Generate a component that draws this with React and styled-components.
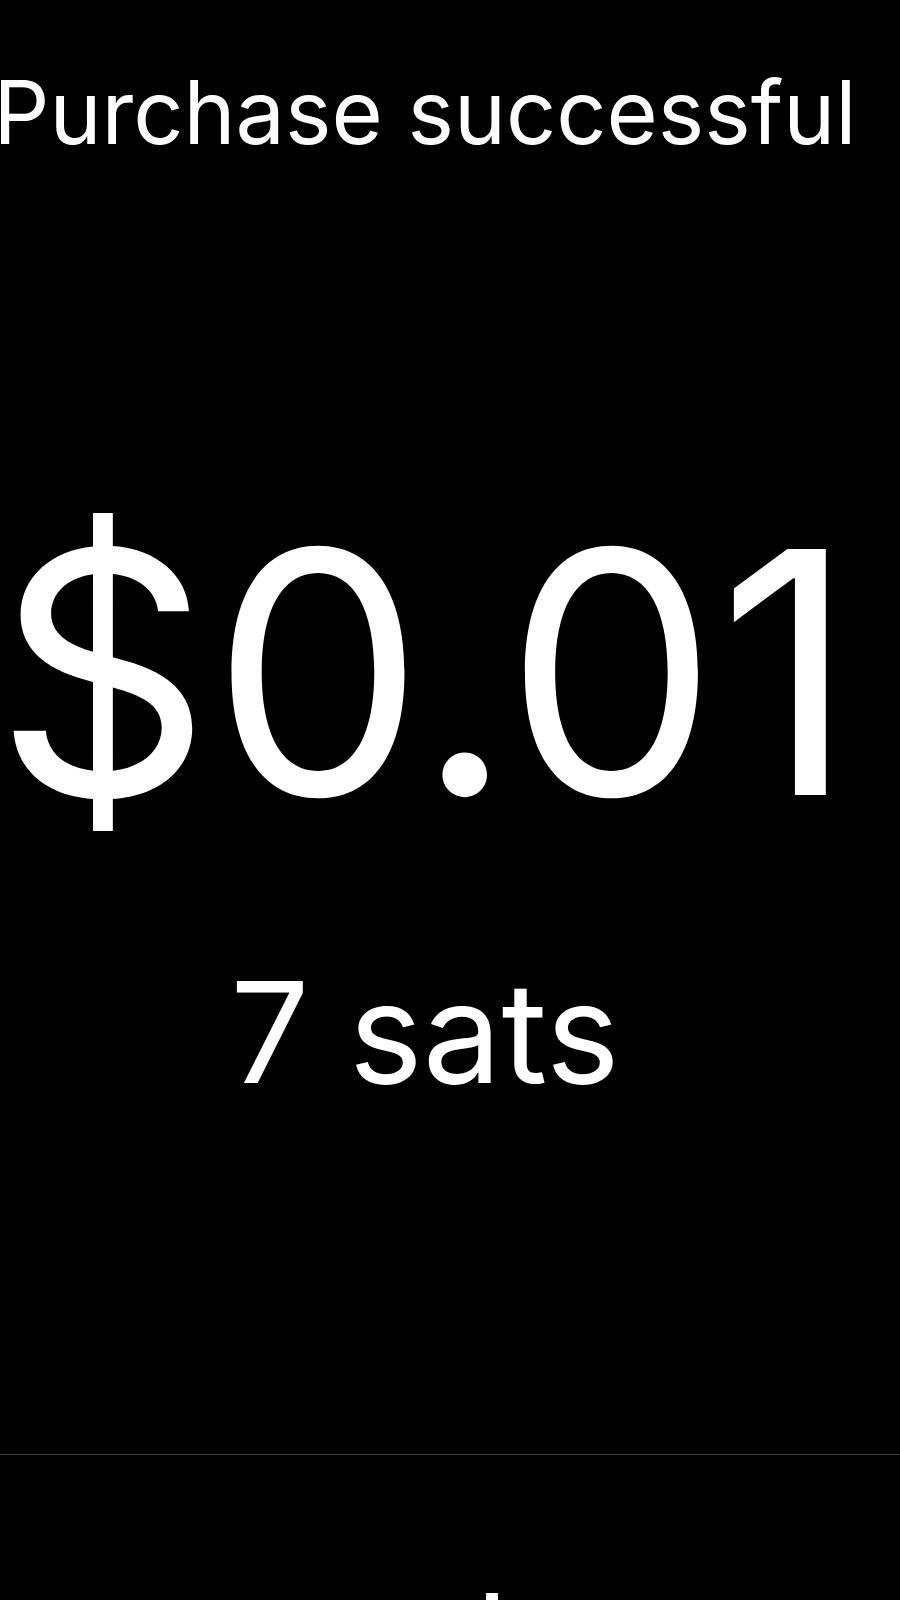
import React from "react";
import styled, { createGlobalStyle } from "styled-components";

const GlobalStyle = createGlobalStyle`
  html, body {
    margin: 0;
    padding: 0;
    background: #000;
  }
  body {
    font-family: Inter, "Liberation Sans", Arial, sans-serif;
    color: #fff;
    overflow: hidden;
  }
`;

const Screen = styled.div`
  width: 900px;
  height: 1600px;
  background: #000;
  display: flex;
  flex-direction: column;
  overflow: hidden;
`;

const Receipt = styled.section`
  display: flex;
  flex-direction: column;
  align-items: center;
  flex-shrink: 0;
  width: 850px;
  padding-top: 68px;
`;

const Title = styled.h1`
  margin: 0;
  font-size: 88px;
  font-weight: 400;
  line-height: 1;
  white-space: nowrap;
`;

const Amount = styled.div`
  margin-top: 348px;
  font-size: 338px;
  line-height: 1;
  white-space: nowrap;
`;

const Sats = styled.div`
  margin-top: 120px;
  font-size: 140px;
  line-height: 1;
  white-space: nowrap;
`;

const Divider = styled.div`
  flex-shrink: 0;
  margin-top: 352px;
  height: 1px;
  background: #3c3c3c;
`;

const Footer = styled.footer`
  display: flex;
  flex-shrink: 0;
  justify-content: center;
  padding: 138px 0 0 84px;
`;

const NewSale = styled.button`
  display: flex;
  padding: 0;
  border: 0;
  background: none;
  color: #fff;
  cursor: pointer;
`;

function PlusIcon({ size = 96 }) {
  return (
    <svg width={size} height={size} viewBox="0 0 96 96" fill="none">
      <path d="M48 0v96M0 48h96" stroke="currentColor" strokeWidth="12" />
    </svg>
  );
}

export default function App() {
  return (
    <>
      <GlobalStyle />
      <Screen>
        <Receipt>
          <Title>Purchase successful</Title>
          <Amount>$0.01</Amount>
          <Sats>7 sats</Sats>
        </Receipt>
        <Divider />
        <Footer>
          <NewSale aria-label="New sale">
            <PlusIcon />
          </NewSale>
        </Footer>
      </Screen>
    </>
  );
}
